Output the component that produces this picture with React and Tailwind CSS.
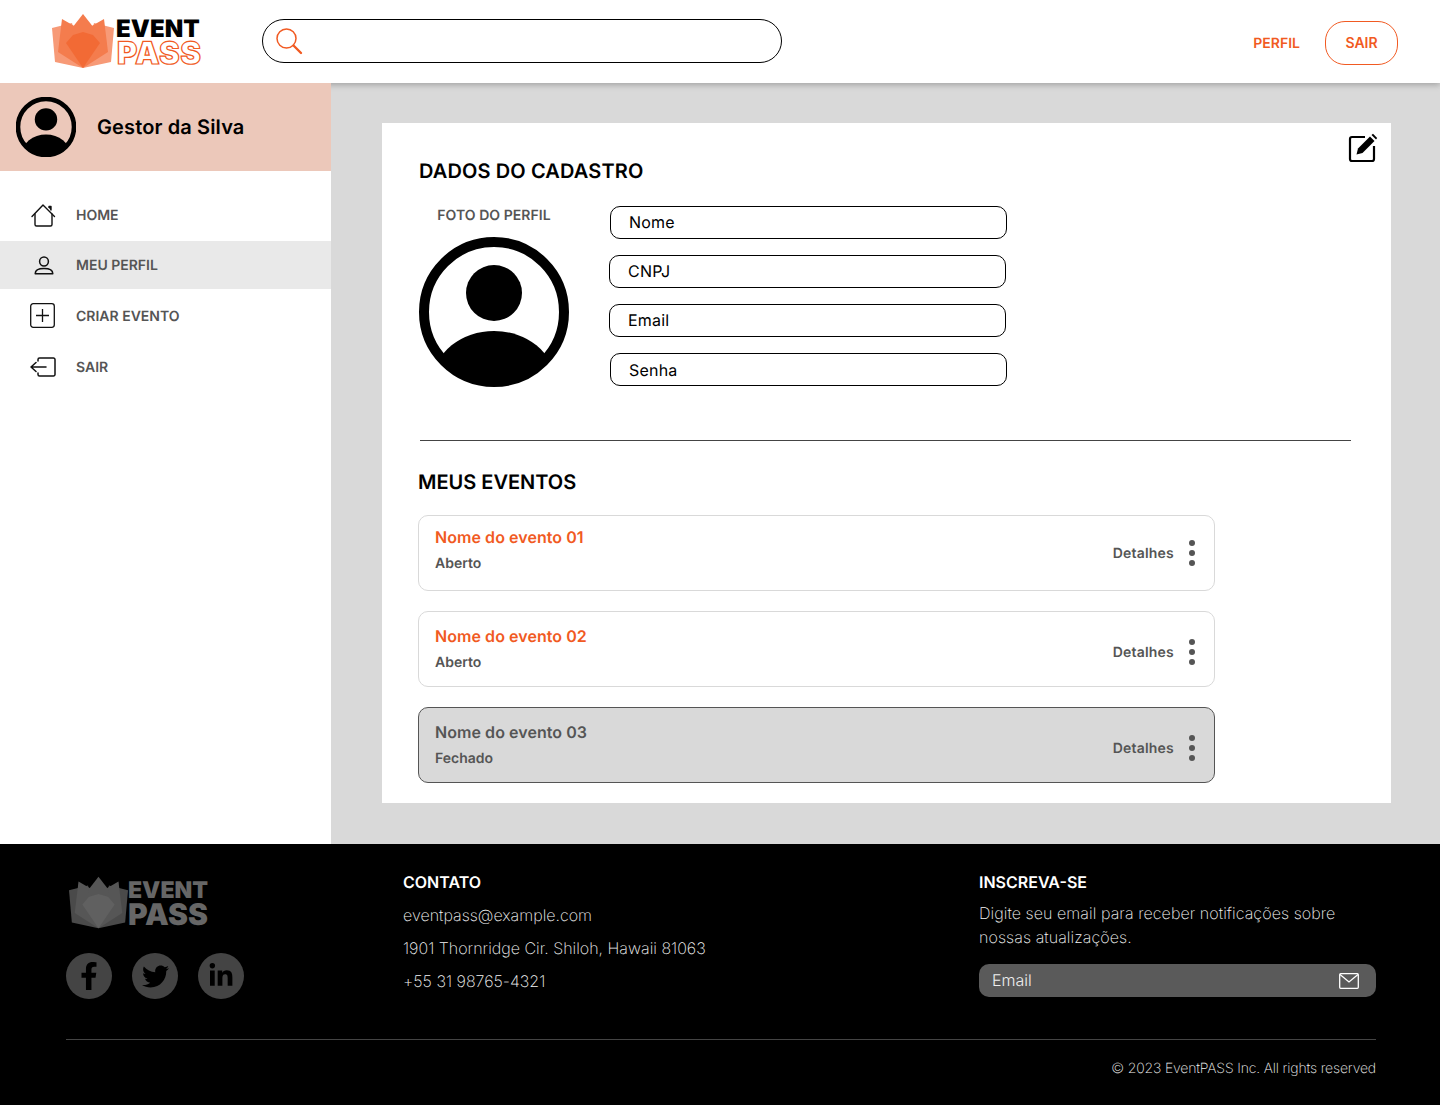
import { FaFacebookF, FaTwitter, FaLinkedinIn } from "react-icons/fa";

function Flame({ dark }) {
  const outer = dark ? "#4a4a4a" : "#f79a77";
  const mid = dark ? "#565656" : "#f47c4d";
  const core = dark ? "#606060" : "#f26a35";
  return (
    <svg viewBox="0 0 62 55" className={dark ? "w-[59px] h-[54px]" : "w-[62px] h-[55px]"}>
      <path d="M0 14 L20 9 L31 54 L3 48 Z" fill={outer} />
      <path d="M62 14 L42 9 L31 54 L59 48 Z" fill={outer} />
      <path d="M10 5 L24 13 L31 54 L6 38 Z" fill={mid} />
      <path d="M52 5 L38 13 L31 54 L56 38 Z" fill={mid} />
      <path d="M31 0 L42 14 L31 54 L20 14 Z" fill={mid} />
      <path d="M31 18 L41 21 L48 29 L31 54 L14 29 L21 21 Z" fill={core} />
    </svg>
  );
}

function Avatar({ className, ring }) {
  return (
    <svg viewBox="0 0 150 150" className={className}>
      <defs>
        <clipPath id="ring">
          <circle cx="75" cy="75" r="70" />
        </clipPath>
      </defs>
      <circle cx="75" cy="56" r="28" fill="black" />
      <ellipse cx="75" cy="143" rx="60" ry="49" fill="black" clipPath="url(#ring)" />
      <circle cx="75" cy="75" r="70" fill="none" stroke="black" strokeWidth={ring} />
    </svg>
  );
}

function SearchIcon() {
  return (
    <svg viewBox="0 0 28 28" fill="none" stroke="#f15a22" className="w-[28px] h-[28px]">
      <circle cx="11.5" cy="11.5" r="9.5" strokeWidth="1.5" />
      <path d="M18.5 18.5 L26 26" strokeWidth="2.4" strokeLinecap="round" />
    </svg>
  );
}

function HomeIcon() {
  return (
    <svg viewBox="0 0 25 23" fill="none" stroke="#111" strokeWidth="1.4" strokeLinejoin="round" className="w-[25px] h-[23px]">
      <path d="M1 12.5 L12 1 L23.5 12.5" strokeLinecap="round" />
      <path d="M4 9.5 V20.5 A1.5 1.5 0 0 0 5.5 22 H19.5 A1.5 1.5 0 0 0 21 20.5 V9.5" />
      <path d="M18 4 V2.5 H20 V6.5" fill="#111" />
    </svg>
  );
}

function UserIcon() {
  return (
    <svg viewBox="0 0 20 19" fill="none" stroke="#111" strokeWidth="1.5" className="w-[20px] h-[19px]">
      <circle cx="10" cy="5.5" r="4.4" />
      <path d="M1.2 17.8 C1.2 14 5 12.6 10 12.6 C15 12.6 18.8 14 18.8 17.8 Z" strokeLinejoin="round" />
    </svg>
  );
}

function PlusIcon() {
  return (
    <svg viewBox="0 0 25 25" fill="none" stroke="#111" strokeWidth="1.3" className="w-[25px] h-[25px] -translate-x-[1px] -translate-y-[1px]">
      <rect x="0.7" y="0.7" width="23.6" height="23.6" rx="2.5" />
      <path d="M12.5 6 V19 M6 12.5 H19" />
    </svg>
  );
}

function ExitIcon() {
  return (
    <svg viewBox="0 0 26 20" fill="none" stroke="#111" strokeWidth="1.5" strokeLinecap="round" strokeLinejoin="round" className="w-[26px] h-[20px] -translate-x-[1px]">
      <path d="M8 4 V2.5 A1.5 1.5 0 0 1 9.5 1 H23.5 A1.5 1.5 0 0 1 25 2.5 V17.5 A1.5 1.5 0 0 1 23.5 19 H9.5 A1.5 1.5 0 0 1 8 17.5 V16" />
      <path d="M1 10 H16 M1 10 L6 5.5 M1 10 L6 14.5" />
    </svg>
  );
}

function MailIcon() {
  return (
    <svg viewBox="0 0 20 16" fill="none" stroke="white" strokeWidth="1.3" className="w-[20px] h-[16px]">
      <rect x="0.7" y="0.7" width="18.6" height="14.6" rx="1" />
      <path d="M1 1.5 L10 9 L19 1.5" />
    </svg>
  );
}

function Header() {
  return (
    <header className="h-[83px] bg-white flex items-center relative z-10 shadow-[0_2px_6px_rgba(0,0,0,0.25)]">
      <div className="ml-[52px] w-[210px] flex items-center">
        <Flame />
        <div className="ml-[2px] font-black leading-none">
          <div className="text-[24px] text-black tracking-[0.1px] leading-[23px]">EVENT</div>
          <div className="ml-[1px] text-[31px] leading-[27px] text-white [-webkit-text-stroke:1.2px_#f15a22] tracking-[0.4px]">PASS</div>
        </div>
      </div>
      <div className="mb-[1px] w-[520px] h-[44px] border border-black rounded-[22px] flex items-center pl-[12px]">
        <SearchIcon />
      </div>
      <div className="ml-auto mr-[42px] mt-[2px] flex items-center gap-[25px]">
        <span className="pt-[2px] text-sm font-semibold text-[#f15a22]">PERFIL</span>
        <button className="w-[73px] h-[44px] rounded-[20px] border border-[#f15a22] text-sm font-semibold text-[#f15a22]">SAIR</button>
      </div>
    </header>
  );
}

function SideItem({ icon, label, active, h }) {
  return (
    <div className={`${h} ${active ? "bg-[#e9e9e9]" : ""} flex items-center pl-[30px]`}>
      <div className="w-[27px] flex justify-center">{icon}</div>
      <span className="ml-[19px] pt-[2px] text-sm font-semibold text-[#555]">{label}</span>
    </div>
  );
}

function Sidebar() {
  return (
    <aside className="relative z-20 w-[331px] bg-white shrink-0">
      <div className="h-[88px] bg-[#ecc8ba] flex items-center pl-[16px]">
        <Avatar ring={11.5} className="w-[60px] h-[60px]" />
        <span className="ml-[21px] text-xl font-semibold text-black tracking-[0.13px]">Gestor da Silva</span>
      </div>
      <nav className="pt-[19px]">
        <SideItem h="h-[50px] mb-[1px]" label="HOME" icon={<HomeIcon />} />
        <SideItem h="h-[48px]" active label="MEU PERFIL" icon={<UserIcon />} />
        <SideItem h="h-[54px]" label="CRIAR EVENTO" icon={<PlusIcon />} />
        <SideItem h="h-[48px]" label="SAIR" icon={<ExitIcon />} />
      </nav>
    </aside>
  );
}

function Field({ label, className }) {
  return (
    <div className={`${className} w-[397px] h-[33px] border border-black rounded-[10px] flex items-center pl-[18px] text-base text-black tracking-[0.2px]`}>
      {label}
    </div>
  );
}

function EventRow({ name, status, closed, first }) {
  return (
    <div className={`w-[797px] h-[76px] rounded-[10px] border flex justify-between pl-[16px] pr-[19px] ${closed ? "bg-[#d9d9d9] border-[#555]" : "bg-white border-[#d9d9d9]"}`}>
      <div className={first ? "pt-[10px]" : "pt-[13px]"}>
        <div className={`text-base font-semibold leading-[22px] tracking-[0.06px] ${closed ? "text-[#555]" : "text-[#f15a22]"}`}>{name}</div>
        <div className="mt-[6px] text-sm font-semibold text-[#555] leading-[20px]">{status}</div>
      </div>
      <div className={`flex items-center gap-[15px] self-start ${first ? "pt-[24px]" : "pt-[27px]"}`}>
        <span className="pt-[2px] text-sm font-semibold text-[#555] tracking-[0.2px]">Detalhes</span>
        <div className="flex flex-col gap-[4px]">
          <i className="block w-[6px] h-[6px] rounded-full bg-[#555]" />
          <i className="block w-[6px] h-[6px] rounded-full bg-[#555]" />
          <i className="block w-[6px] h-[6px] rounded-full bg-[#555]" />
        </div>
      </div>
    </div>
  );
}

function Card() {
  return (
    <div className="relative w-[1009px] h-[680px] bg-white pt-[36px] pl-[37px]">
      <svg viewBox="0 0 30 30" fill="none" className="absolute top-[10px] right-[13px] w-[30px] h-[30px]">
        <path d="M17 4 H4 A2 2 0 0 0 2 6 V26 A2 2 0 0 0 4 28 H24 A2 2 0 0 0 26 26 V13" stroke="black" strokeWidth="2.2" />
        <path d="M8.5 21.5 L10 15.5 L22 3.5 L26.5 8 L14.5 20 Z" fill="black" />
        <path d="M23.5 2 L25 0.8 L29.2 5 L28 6.5 Z" fill="black" />
      </svg>
      <h2 className="text-xl font-semibold text-black leading-[24px] tracking-[0.12px]">DADOS DO CADASTRO</h2>
      <div className="mt-[22px] flex">
        <div className="w-[150px]">
          <div className="pt-[1px] text-sm font-semibold text-[#555] text-center leading-[20px] tracking-[0.05px]">FOTO DO PERFIL</div>
          <Avatar ring={10} className="mt-[11px] w-[150px] h-[150px]" />
        </div>
        <div className="ml-[40px] flex flex-col gap-[16px] pt-[1px]">
          <Field label="Nome" className="ml-[1px] pb-[2px]" />
          <Field label="CNPJ" className="pb-[2px]" />
          <Field label="Email" className="pb-[2px]" />
          <Field label="Senha" className="ml-[1px]" />
        </div>
      </div>
      <div className="mt-[53px] ml-[1px] w-[931px] border-t border-[#444]" />
      <h2 className="mt-[29px] -ml-[1px] text-xl font-semibold text-black leading-[24px]">MEUS EVENTOS</h2>
      <div className="mt-[21px] -ml-[1px] flex flex-col gap-[20px]">
        <EventRow first name="Nome do evento 01" status="Aberto" />
        <EventRow name="Nome do evento 02" status="Aberto" />
        <EventRow closed name="Nome do evento 03" status="Fechado" />
      </div>
    </div>
  );
}

function Footer() {
  return (
    <footer className="h-[261px] bg-black pl-[66px] pr-[64px] text-white">
      <div className="h-[195px] flex">
        <div className="w-[337px] pt-[32px]">
          <div className="flex items-center pl-[3px]">
            <Flame dark />
            <div className="mt-[2px] font-black text-[#666] leading-none">
              <div className="text-[23px] leading-[22px]">EVENT</div>
              <div className="text-[30px] leading-[28px]">PASS</div>
            </div>
          </div>
          <div className="mt-[23px] flex gap-[20px]">
            <div className="w-[46px] h-[46px] rounded-full bg-[#444] flex items-center justify-center"><FaFacebookF size={28} color="black" /></div>
            <div className="w-[46px] h-[46px] rounded-full bg-[#444] flex items-center justify-center"><FaTwitter size={27} color="black" /></div>
            <div className="w-[46px] h-[46px] rounded-full bg-[#444] flex items-center justify-center"><FaLinkedinIn size={26} color="black" /></div>
          </div>
        </div>
        <div className="w-[576px] pt-[27px]">
          <h3 className="text-base font-semibold leading-[22px]">CONTATO</h3>
          <div className="mt-[11px] flex flex-col gap-[11px] text-base font-extralight text-[#f5f5f5] leading-[22px] tracking-[0.02px]">
            <span>eventpass@example.com</span>
            <span>1901 Thornridge Cir. Shiloh, Hawaii 81063</span>
            <span>+55 31 98765-4321</span>
          </div>
        </div>
        <div className="w-[397px] pt-[27px]">
          <h3 className="text-base font-semibold leading-[22px]">INSCREVA-SE</h3>
          <p className="mt-[8px] text-base font-extralight text-[#f5f5f5] leading-[24px] tracking-[0.08px]">Digite seu email para receber notificações sobre nossas atualizações.</p>
          <div className="mt-[15px] h-[33px] rounded-[10px] bg-[#5a5a5a] flex items-center justify-between pl-[13px] pr-[17px] text-base font-light text-[#eee]">
            <span className="pb-[2px]">Email</span>
            <MailIcon />
          </div>
        </div>
      </div>
      <div className="border-t border-[#444] pt-[19px] text-right text-sm font-extralight text-[#f5f5f5] leading-[20px] tracking-[-0.15px]">© 2023 EventPASS Inc. All rights reserved</div>
    </footer>
  );
}

export default function App() {
  return (
    <div className="min-h-screen bg-white font-['Inter',sans-serif] [text-rendering:geometricPrecision]">
      <Header />
      <main className="flex h-[761px]">
        <Sidebar />
        <section className="flex-1 bg-[#d9d9d9] pt-[40px] pl-[51px]">
          <Card />
        </section>
      </main>
      <Footer />
    </div>
  );
}
